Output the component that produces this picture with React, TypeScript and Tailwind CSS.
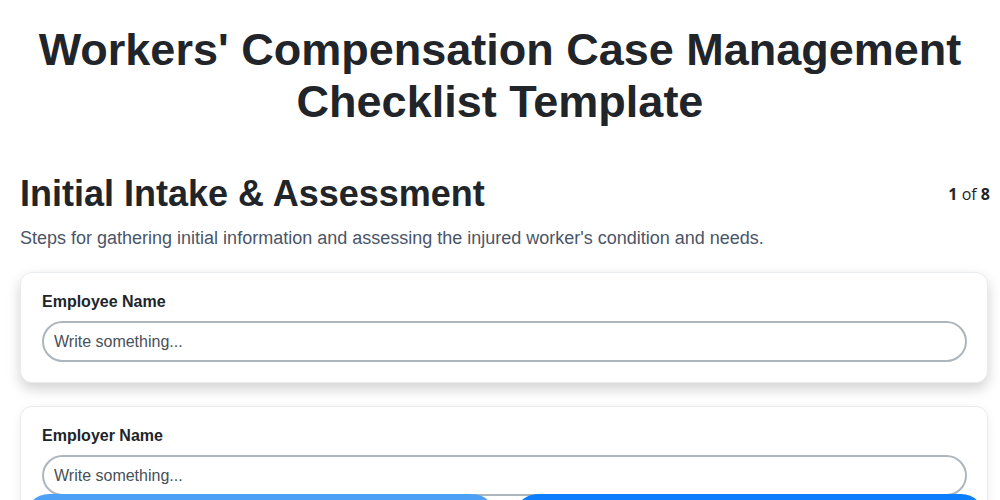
const fields = [
  { id: 1, label: "Employee Name" },
  { id: 2, label: "Employer Name" },
  { id: 3, label: "Date of Injury" },
]

const App = () => {
  return (
    <div className="min-h-screen bg-white text-[#212529] font-['Liberation_Sans',Arial,sans-serif]">
      <h1 className="pt-6 px-5 text-center text-[45px] leading-[52px] font-bold">
        Workers' Compensation Case Management Checklist Template
      </h1>

      <div className="pl-5 pr-[10px] mt-[44px]">
        <div className="flex items-center justify-between">
          <h2 className="text-[36px] leading-[43px] font-bold">Initial Intake &amp; Assessment</h2>
          <div className="text-base font-['Open_Sans',sans-serif] text-[#212529]">
            <span className="font-bold">1</span> of <span className="font-bold">8</span>
          </div>
        </div>
        <p className="mt-[10px] text-[18px] leading-[27px] text-[#4a5568]">
          Steps for gathering initial information and assessing the injured worker's condition and needs.
        </p>

        <div className="mt-5 mr-[2px] flex flex-col gap-[23px] pb-24">
          {fields.map((field, index) => (
            <div
              key={field.id}
              className={`rounded-xl border border-[#e9ecef] bg-white pl-[21px] pr-5 pt-[17px] pb-5 ${
                index === 0
                  ? "shadow-[0_6px_14px_rgba(0,0,0,0.18)]"
                  : "shadow-[0_2px_10px_rgba(0,0,0,0.07)]"
              }`}
            >
              <label className="block text-base leading-6 font-bold mb-[7px]">{field.label}</label>
              <input
                type="text"
                placeholder="Write something..."
                className="block w-full h-[41px] rounded-full border-2 border-[#adb5bd] px-2.5 text-base text-[#495057] placeholder:text-[#495057] outline-none"
              />
            </div>
          ))}
        </div>
      </div>

      <div className="fixed left-0 right-0 top-[494px] grid grid-cols-2 gap-[18px] pl-[25px] pr-[15px]">
        <button aria-label="Previous" className="h-12 rounded-[24px] bg-[#4ca0f6]" />
        <button aria-label="Next" className="h-12 rounded-[24px] bg-[#0b7dfd]" />
      </div>
    </div>
  )
}

export default App
